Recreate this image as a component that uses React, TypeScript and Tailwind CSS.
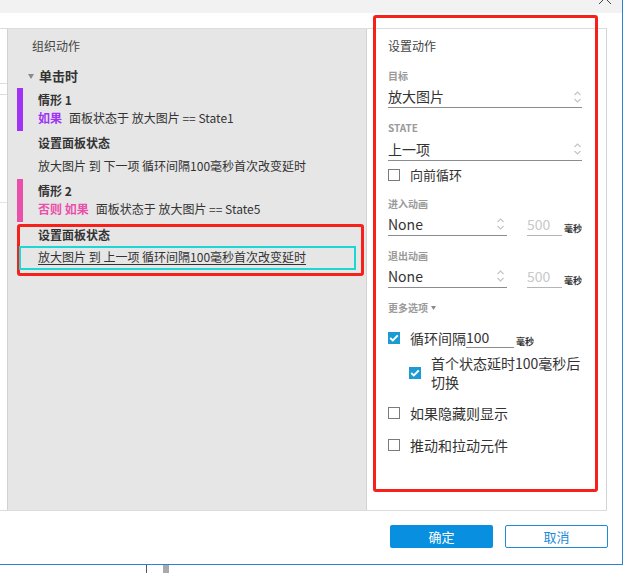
import React from "react";

const Spinner = () => (
  <svg width="9" height="14" viewBox="0 0 9 14" className="shrink-0">
    <path d="M1.5 5 L4.5 2 L7.5 5" fill="none" stroke="#c4c4c4" strokeWidth="1.2" />
    <path d="M1.5 9 L4.5 12 L7.5 9" fill="none" stroke="#c4c4c4" strokeWidth="1.2" />
  </svg>
);

function Box({ checked = false }: { checked?: boolean }) {
  if (checked) {
    return (
      <span className="w-[12px] h-[12px] bg-[#1b9ad4] flex items-center justify-center shrink-0">
        <svg width="10" height="8" viewBox="0 0 10 8">
          <path d="M1.2 4 L3.8 6.4 L8.8 1.4" fill="none" stroke="#fff" strokeWidth="2" />
        </svg>
      </span>
    );
  }
  return <span className="w-[12px] h-[12px] border border-[#7a7a7a] bg-white shrink-0" />;
}

function Label({ children, className = "" }: { children: React.ReactNode; className?: string }) {
  return <div className={`h-[14px] leading-[14px] text-[10px] font-semibold text-[#9a9a9a] ${className}`}>{children}</div>;
}

function AnimRow({ mt }: { mt: string }) {
  return (
    <div className={`flex items-start ${mt}`}>
      <div className="w-[119px] h-[23px] border-b border-[#8c8c8c] flex items-center justify-between pr-[2px]">
        <span className="text-[14px] text-[#333] leading-[22px]">None</span>
        <Spinner />
      </div>
      <div className="ml-[20px] w-[35px] h-[23px] border-b border-[#b5b5b5] text-[14px] leading-[22px] text-[#c8c8c8]">500</div>
      <span className="ml-[2px] mt-[10px] text-[9px] font-bold leading-[12px] text-[#333]">毫秒</span>
    </div>
  );
}

export default function App() {
  return (
    <div className="relative w-[630px] h-[573px] bg-white overflow-hidden font-['Noto_Sans_CJK_SC',sans-serif] text-[#333]">
      <div className="w-[623px] h-[565px] border-r border-b border-[#2a83d2] flex flex-col">
        {/* title strip */}
        <div className="h-[13px] bg-[#f2f2f2] relative shrink-0">
          <svg width="14" height="14" viewBox="0 0 14 14" className="absolute right-[10px] top-[-9px]">
            <path d="M1 1 L13 13 M13 1 L1 13" stroke="#444" strokeWidth="1" />
          </svg>
        </div>
        <div className="h-[15px] shrink-0" />

        {/* panels */}
        <div className="flex h-[483px] w-[607px] border-t border-b border-[#dcdcdc] shrink-0">
          <div className="w-[7px] shrink-0 flex flex-col">
            <div className="h-[55px] border-b border-[#dedede]" />
            <div className="h-[11px] border-b border-[#dedede]" />
            <div className="h-[108px] border-b border-[#e4e4e4]" />
          </div>

          {/* left: organise actions */}
          <div className="w-[360px] shrink-0 bg-[#e6e6e6] border-l border-r border-[#d2d2d2] flex flex-col text-[12px]">
            <div className="mt-[8px] ml-[24px] h-[18px] leading-[18px] text-[#444]">组织动作</div>
            <div className="mt-[12px] ml-[20px] h-[18px] flex items-center gap-[5px]">
              <svg width="6" height="5" viewBox="0 0 6 5">
                <path d="M0 0 L6 0 L3 5 Z" fill="#8a8a8a" />
              </svg>
              <span className="text-[13px] font-bold leading-[18px] text-[#333]">单击时</span>
            </div>

            <div className="mt-[3px] ml-[9px] border-l-[6px] border-[#a033f5] pl-[15px] pt-[3px] pb-[4px]">
              <div className="h-[18px] leading-[18px] font-bold">情形 1</div>
              <div className="h-[18px] leading-[18px]">
                <span className="font-bold text-[#a033f5]">如果</span>
                <span className="ml-[7px]">面板状态于 放大图片 == State1</span>
              </div>
            </div>
            <div className="mt-[3px] ml-[30px] h-[18px] leading-[18px] font-bold">设置面板状态</div>
            <div className="mt-[5px] ml-[30px] h-[18px] leading-[18px]">放大图片 到 下一项 循环间隔100毫秒首次改变延时</div>

            <div className="mt-[4px] ml-[9px] border-l-[6px] border-[#ea50aa] pl-[15px] pt-[2px] pb-[4px]">
              <div className="h-[19px] leading-[19px] font-bold">情形 2</div>
              <div className="h-[18px] leading-[18px]">
                <span className="font-bold text-[#ea50aa]">否则 如果</span>
                <span className="ml-[7px]">面板状态于 放大图片 == State5</span>
              </div>
            </div>
            <div className="mt-[4px] ml-[30px] h-[18px] leading-[18px] font-bold">设置面板状态</div>
            <div className="mt-[4px] ml-[30px] h-[18px] leading-[18px] underline underline-offset-2">放大图片 到 上一项 循环间隔100毫秒首次改变延时</div>
          </div>

          {/* right: set action */}
          <div className="flex-1 border-r border-[#d4d4d4] pl-[21px] flex flex-col">
            <div className="mt-[8px] h-[18px] leading-[18px] text-[12px] text-[#444]">设置动作</div>
            <Label className="mt-[14px]">目标</Label>
            <div className="mt-[3px] w-[194px] h-[22px] border-b border-[#8c8c8c] flex items-center justify-between">
              <span className="text-[14px] leading-[21px]">放大图片</span>
              <Spinner />
            </div>
            <Label className="mt-[13px]">STATE</Label>
            <div className="mt-[3px] w-[194px] h-[23px] border-b border-[#8c8c8c] flex items-center justify-between">
              <span className="text-[14px] leading-[22px]">上一项</span>
              <Spinner />
            </div>
            <div className="mt-[5px] h-[18px] flex items-center gap-[10px]">
              <Box />
              <span className="text-[13px] leading-[18px]">向前循环</span>
            </div>
            <Label className="mt-[13px]">进入动画</Label>
            <AnimRow mt="mt-[2px]" />
            <Label className="mt-[13px]">退出动画</Label>
            <AnimRow mt="mt-[2px]" />
            <div className="mt-[13px] h-[14px] flex items-center gap-[3px]">
              <span className="text-[10px] font-semibold text-[#9a9a9a] leading-[14px]">更多选项</span>
              <svg width="5" height="4" viewBox="0 0 5 4">
                <path d="M0 0 L5 0 L2.5 4 Z" fill="#8a8a8a" />
              </svg>
            </div>
            <div className="mt-[13px] h-[20px] flex items-center">
              <Box checked />
              <span className="ml-[10px] text-[14px] leading-[20px]">循环间隔</span>
              <span className="w-[48px] h-[20px] border-b border-[#8c8c8c] text-[14px] leading-[18px]">100</span>
              <span className="ml-[2px] mt-[8px] text-[9px] font-bold leading-[12px]">毫秒</span>
            </div>
            <div className="mt-[6px] ml-[21px] flex items-center">
              <Box checked />
              <span className="ml-[10px] w-[156px] text-[14px] leading-[19px]">首个状态延时100毫秒后切换</span>
            </div>
            <div className="mt-[12px] h-[18px] flex items-center gap-[10px]">
              <Box />
              <span className="text-[14px] leading-[18px]">如果隐藏则显示</span>
            </div>
            <div className="mt-[14px] h-[18px] flex items-center gap-[10px]">
              <Box />
              <span className="text-[14px] leading-[18px]">推动和拉动元件</span>
            </div>
          </div>
        </div>

        {/* footer */}
        <div className="flex-1 flex justify-end items-start pt-[14px] pr-[14px] gap-[12px]">
          <button className="w-[103px] h-[23px] rounded-[2px] bg-[#088fe0] text-white text-[13px] leading-[23px]">确定</button>
          <button className="w-[103px] h-[23px] rounded-[2px] border border-[#1f8ad8] bg-white text-[#1f8ad8] text-[13px] leading-[21px]">取消</button>
        </div>
      </div>

      {/* below dialog */}
      <div className="flex h-[8px]">
        <div className="ml-[146px] w-px bg-[#555]" />
        <div className="ml-[16px] w-[6px] bg-[#aaaaaa]" />
      </div>

      {/* annotation boxes */}
      <div className="absolute left-[17px] top-[224px] w-[347px] h-[52px] border-[3px] border-[#f5211a] rounded-[3px]" />
      <div className="absolute left-[19px] top-[246px] w-[337px] h-[24px] border-2 border-[#1dd6d6]" />
      <div className="absolute left-[373px] top-[15px] w-[225px] h-[477px] border-[3px] border-[#f5211a] rounded-[3px]" />
    </div>
  );
}
